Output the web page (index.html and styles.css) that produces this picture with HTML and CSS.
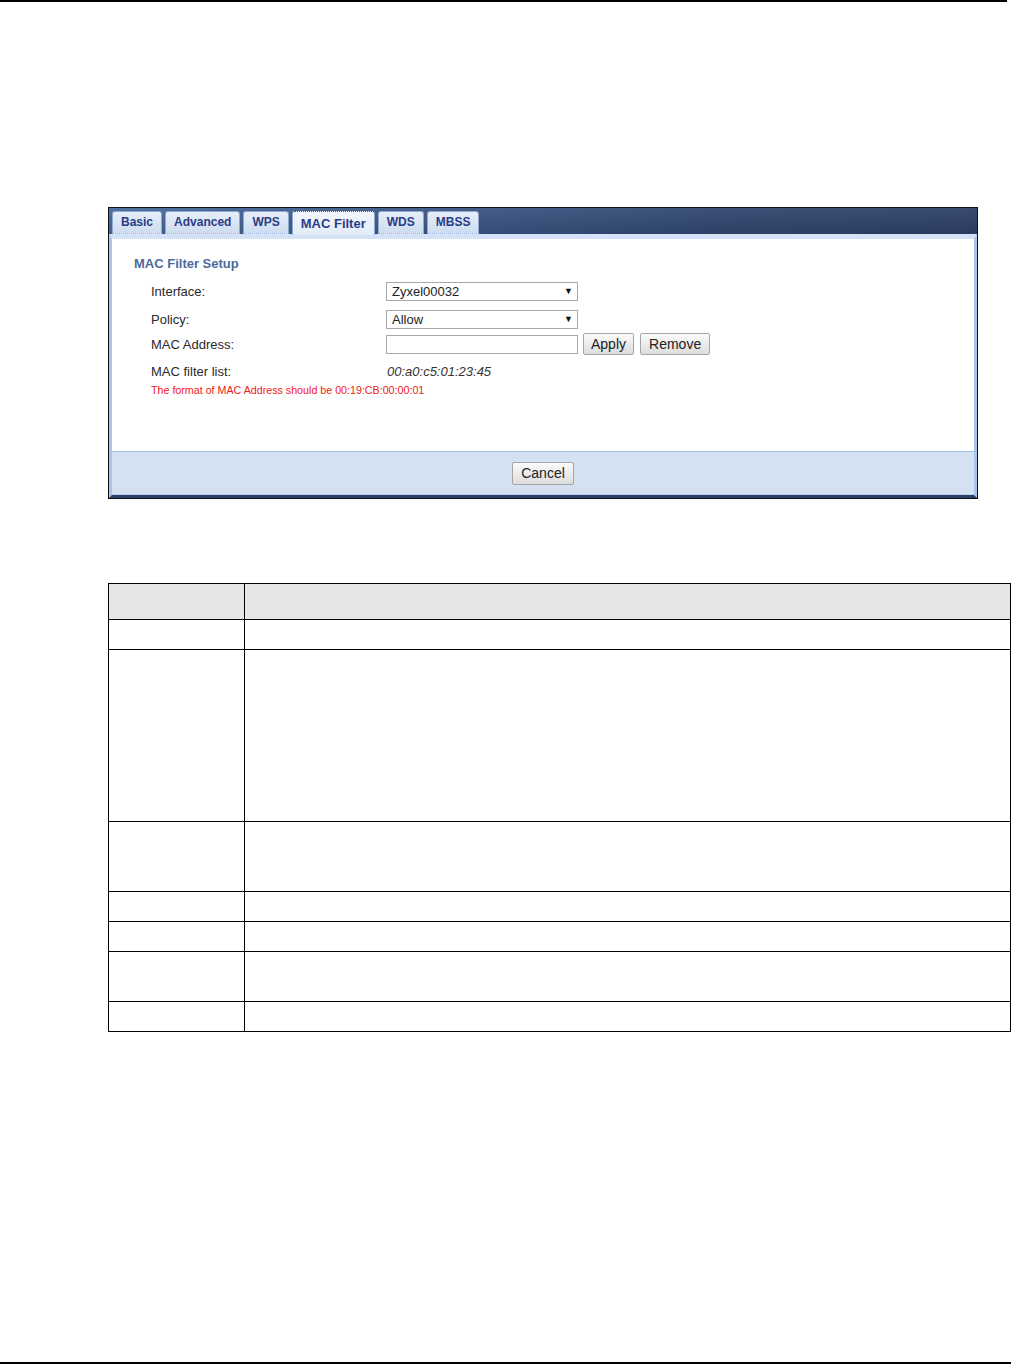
FILE: index.html
```html
<!DOCTYPE html>
<html lang="en">
<head>
    <meta charset="UTF-8">
    <title>MAC Filter</title>
    <link rel="stylesheet" href="styles.css">
</head>
<body>
    <div class="top-rule"></div>

    <div class="frame">
        <div class="tab-bar">
            <div class="tab">Basic</div>
            <div class="tab">Advanced</div>
            <div class="tab">WPS</div>
            <div class="tab active">MAC Filter</div>
            <div class="tab">WDS</div>
            <div class="tab">MBSS</div>
        </div>
        <div class="panel">
            <div class="content">
                <div class="section-title">MAC Filter Setup</div>
                <div class="form-row row-interface">
                    <div class="label">Interface:</div>
                    <div class="select"><span>Zyxel00032</span><span class="arrow">&#9660;</span></div>
                </div>
                <div class="form-row row-policy">
                    <div class="label">Policy:</div>
                    <div class="select"><span>Allow</span><span class="arrow">&#9660;</span></div>
                </div>
                <div class="form-row row-address">
                    <div class="label">MAC Address:</div>
                    <input type="text" class="text-input">
                    <div class="button">Apply</div>
                    <div class="button">Remove</div>
                </div>
                <div class="form-row row-list">
                    <div class="label">MAC filter list:</div>
                    <div class="mac-value">00:a0:c5:01:23:45</div>
                </div>
                <div class="note">The format of MAC Address should be 00:19:CB:00:00:01</div>
            </div>
            <div class="footer">
                <div class="button cancel">Cancel</div>
            </div>
        </div>
    </div>

    <table class="desc-table">
        <tr class="head"><th class="col-label"></th><th></th></tr>
        <tr class="h30"><td></td><td></td></tr>
        <tr class="h172"><td></td><td></td></tr>
        <tr class="h70"><td></td><td></td></tr>
        <tr class="h30"><td></td><td></td></tr>
        <tr class="h30"><td></td><td></td></tr>
        <tr class="h50"><td></td><td></td></tr>
        <tr class="h30"><td></td><td></td></tr>
    </table>

    <div class="bottom-rule"></div>
</body>
</html>
```

FILE: styles.css
```css
body {
    margin: 0;
    background-color: white;
    font-family: 'Liberation Sans', Arial, sans-serif;
    color: #222;
}

.top-rule {
    width: 1007px;
    border-top: 2px solid #000;
}

.bottom-rule {
    width: 1011px;
    margin-top: 330px;
    border-top: 2px solid #000;
}

/* ---- frame ---- */

.frame {
    width: 868px;
    margin: 205px 0 0 108px;
    border: 1px solid #111;
    background-color: #2e4168;
}

.tab-bar {
    height: 26px;
    display: flex;
    align-items: flex-end;
    gap: 3px;
    padding-left: 3px;
    background: linear-gradient(180deg, rgba(255, 255, 255, 0.06), rgba(0, 0, 0, 0.08)),
                linear-gradient(90deg, #46689c, #30466f 70%, #2d3f66);
}

.tab {
    height: 21px;
    line-height: 20px;
    padding: 0 8px;
    font-size: 12px;
    font-weight: bold;
    color: #2b3c86;
    background: linear-gradient(180deg, #e6eef9, #cddcf0);
    border: 1px solid #8fa9d0;
    border-bottom: 1px dotted #9ab3d8;
    border-radius: 3px 3px 0 0;
}

.tab.active {
    height: 23px;
    line-height: 24px;
    padding: 0 8px;
    font-size: 13px;
    background: linear-gradient(180deg, #f2f6fc, #e1ebf8);
    border-bottom: none;
    border-top: 1px dotted #555;
    margin-bottom: -1px;
    position: relative;
}

.panel {
    border-top: 5px solid #d3e2f6;
    border-left: 3px solid #a9c4ec;
    border-right: 3px solid #a9c4ec;
    border-bottom: 3px solid #2c3f66;
    background-color: white;
}

.content {
    height: 195px;
    padding: 17px 0 0 22px;
    background-color: white;
}

.section-title {
    font-size: 13px;
    font-weight: bold;
    line-height: 15px;
    color: #4c6b9c;
}

.form-row {
    display: flex;
    align-items: center;
    padding-left: 17px;
    font-size: 13px;
}

.label {
    width: 235px;
    color: #2a2a2a;
}

.row-interface {
    height: 22px;
    margin-top: 9px;
}

.row-policy {
    height: 22px;
    margin-top: 6px;
}

.row-address {
    height: 24px;
    margin-top: 2px;
}

.row-list {
    height: 18px;
    margin-top: 6px;
}

.select {
    width: 181px;
    height: 17px;
    line-height: 17px;
    padding: 0 4px 0 5px;
    border: 1px solid #a9a9a9;
    display: flex;
    justify-content: space-between;
    color: #222;
    font-size: 13px;
}

.arrow {
    font-size: 9px;
    color: #111;
}

.text-input {
    width: 190px;
    height: 17px;
    margin: 0;
    padding: 0;
    border: 1px solid #a9a9a9;
}

.button {
    height: 20px;
    line-height: 20px;
    padding: 0 7px;
    margin-left: 5px;
    font-size: 14px;
    color: #222;
    background: linear-gradient(180deg, #fbfbfb, #dcdcdc);
    border: 1px solid #a6a6a6;
    border-radius: 2px;
}

.button + .button {
    margin-left: 6px;
    padding: 0 8px;
}

.mac-value {
    font-style: italic;
    color: #333;
    padding-left: 1px;
}

.note {
    margin: 4px 0 0 17px;
    font-size: 10.7px;
    line-height: 12px;
    color: #f21818;
}

.footer {
    height: 42px;
    border-top: 1px solid #a6c1ea;
    border-bottom: 1px solid #b8cfee;
    background-color: #d4e1f1;
    display: flex;
    justify-content: center;
    align-items: center;
}

.button.cancel {
    margin-left: 0;
    padding: 0 8px;
    height: 21px;
    line-height: 21px;
}

/* ---- description table ---- */

.desc-table {
    width: 903px;
    margin: 84px 0 0 108px;
    border-collapse: collapse;
}

.desc-table th,
.desc-table td {
    border: 1px solid #000;
    padding: 0;
}

.desc-table .col-label {
    width: 135px;
}

.desc-table .head {
    height: 36px;
    background-color: #e6e6e6;
}

.h30 { height: 30px; }
.h50 { height: 50px; }
.h70 { height: 70px; }
.h172 { height: 172px; }
```
